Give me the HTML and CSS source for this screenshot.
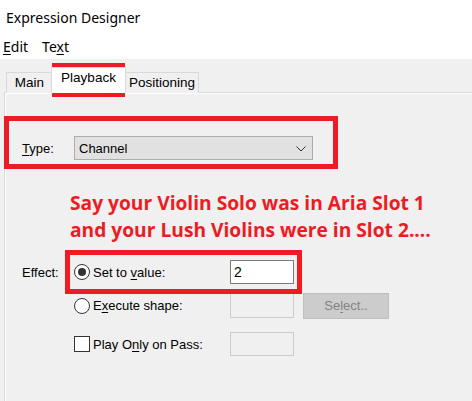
FILE: index.html
```html
<!DOCTYPE html>
<html>
<head>
<meta charset="utf-8">
<link rel="stylesheet" href="styles.css">
</head>
<body>
<div class="window">
  <div class="titlebar">Expression Designer</div>
  <div class="menubar">
    <span class="menu"><u>E</u>dit</span>
    <span class="menu">Te<u>x</u>t</span>
  </div>
  <div class="client">
    <div class="tabs">
      <div class="tab t-main">Main</div>
      <div class="tab selected">Playback</div>
      <div class="tab t-pos">Positioning</div>
    </div>
    <div class="panel">
      <div class="type-row">
        <span class="label"><u>T</u>ype:</span>
        <div class="combo">
          <span>Channel</span>
          <svg class="chev" width="10" height="6" viewBox="0 0 10 6"><path d="M0.5 0.5 L5 5 L9.5 0.5" fill="none" stroke="#333" stroke-width="1"/></svg>
        </div>
      </div>
      <div class="note">
        <div>Say your Violin Solo was in Aria Slot 1</div>
        <div>and your Lush Violins were in Slot 2....</div>
      </div>
      <div class="effect">
        <span class="label eff-label">Effect:</span>
        <label class="opt r1"><span class="radio on"></span><span>Set to <u>v</u>alue:</span></label>
        <div class="field active r1">2</div>

        <label class="opt r2"><span class="radio"></span><span>E<u>x</u>ecute shape:</span></label>
        <div class="field r2"></div>
        <div class="btn r2">Se<u>l</u>ect..</div>

        <label class="opt r3"><span class="check"></span><span>Play O<u>n</u>ly on Pass:</span></label>
        <div class="field r3"></div>
      </div>
    </div>
  </div>
  <div class="hl hl-tab"></div>
  <div class="hl hl-type"></div>
  <div class="hl hl-value"></div>
</div>
</body>
</html>
```

FILE: styles.css
```css
* { box-sizing: border-box; }
html, body { margin: 0; padding: 0; }
body {
  width: 472px;
  height: 401px;
  overflow: hidden;
  background: #ffffff;
  font-family: "Liberation Sans", Arial, sans-serif;
  font-size: 13px;
  color: #000;
}
.window {
  position: relative;
  width: 472px;
  height: 401px;
  display: flex;
  flex-direction: column;
}
u { text-decoration: underline; text-underline-offset: 2px; }
.titlebar {
  height: 33px;
  padding: 8px 0 0 6px;
  font-family: "Noto Sans", sans-serif;
  font-size: 14px;
  line-height: 20px;
}
.menubar {
  height: 26px;
  display: flex;
  gap: 14px;
  padding: 4px 0 0 3px;
  font-family: "Noto Sans", sans-serif;
  font-size: 14px;
  line-height: 20px;
}
.client {
  flex: 1;
  background: #f0f0f0;
  display: flex;
  flex-direction: column;
  padding-left: 4px;
}
.tabs {
  display: flex;
  padding: 13px 0 0 2px;
  height: 34px;
  align-items: flex-end;
  position: relative;
  z-index: 1;
  margin-bottom: -1px;
  font-size: 13.5px;
}
.tab {
  height: 21px;
  border: 1px solid #d9d9d9;
  border-bottom: none;
  line-height: 19px;
  background: #f0f0f0;
  text-align: center;
  white-space: nowrap;
}
.t-main { width: 47px; }
.tab.selected {
  width: 75px;
  height: 26px;
  margin-left: -2px;
  background: #ffffff;
  line-height: 20px;
  position: relative;
  z-index: 2;
}
.t-pos { width: 74px; margin-left: -1px; }
.panel {
  flex: 1;
  border-top: 1px solid #d9d9d9;
  border-left: 1px solid #d9d9d9;
  box-shadow: inset 1px 1px 0 #ffffff;
  padding: 43px 0 0 17px;
}
.type-row {
  display: flex;
  align-items: center;
  height: 24px;
}
.label { width: 52px; }
.combo {
  width: 239px;
  height: 24px;
  background: #e1e1e1;
  border: 1px solid #adadad;
  display: flex;
  align-items: center;
  justify-content: space-between;
  padding: 0 6px 0 4px;
}
.chev { margin-top: 1px; }
.note {
  margin: 29px 0 0 48px;
  font-family: "Open Sans", sans-serif;
  font-weight: bold;
  font-size: 19.2px;
  line-height: 27px;
  color: #ed1c24;
  white-space: nowrap;
}
.effect {
  margin-top: 17px;
  display: grid;
  grid-template-columns: 52px 156px 64px 86px;
  grid-template-rows: 24px 25px 29px;
  row-gap: 9px;
  align-items: center;
}
.effect .r1 { grid-row: 1; }
.effect .r2 { grid-row: 2; }
.effect .r3 { grid-row: 3; align-self: end; }
.eff-label { grid-row: 1; grid-column: 1; }
.opt {
  grid-column: 2;
  display: flex;
  align-items: center;
  gap: 3px;
}
.opt.r3 { height: 24px; }
.radio {
  width: 16px;
  height: 16px;
  border: 1px solid #333;
  border-radius: 50%;
  background: #fff;
  display: flex;
  align-items: center;
  justify-content: center;
}
.radio.on::after {
  content: "";
  width: 8px;
  height: 8px;
  border-radius: 50%;
  background: #333;
}
.check {
  width: 16px;
  height: 16px;
  border: 1px solid #333;
  background: #fff;
}
.field {
  grid-column: 3;
  height: 24px;
  border: 1px solid #cccccc;
  background: #f0f0f0;
  padding: 0 3px;
  line-height: 22px;
  font-size: 14px;
}
.field.r2 { height: 25px; }
.field.active {
  background: #ffffff;
  border-color: #7a7a7a;
}
.btn {
  grid-column: 4;
  margin-left: 9px;
  height: 26px;
  width: 86px;
  background: #cccccc;
  border: 1px solid #bfbfbf;
  color: #838383;
  text-align: center;
  line-height: 24px;
}
.hl {
  position: absolute;
  border: 5px solid #ed1c24;
  pointer-events: none;
}
.hl-tab { left: 52px; top: 63px; width: 73px; height: 34px; }
.hl-type { left: 4px; top: 116px; width: 334px; height: 53px; }
.hl-value { left: 65px; top: 250px; width: 237px; height: 44px; }
```
